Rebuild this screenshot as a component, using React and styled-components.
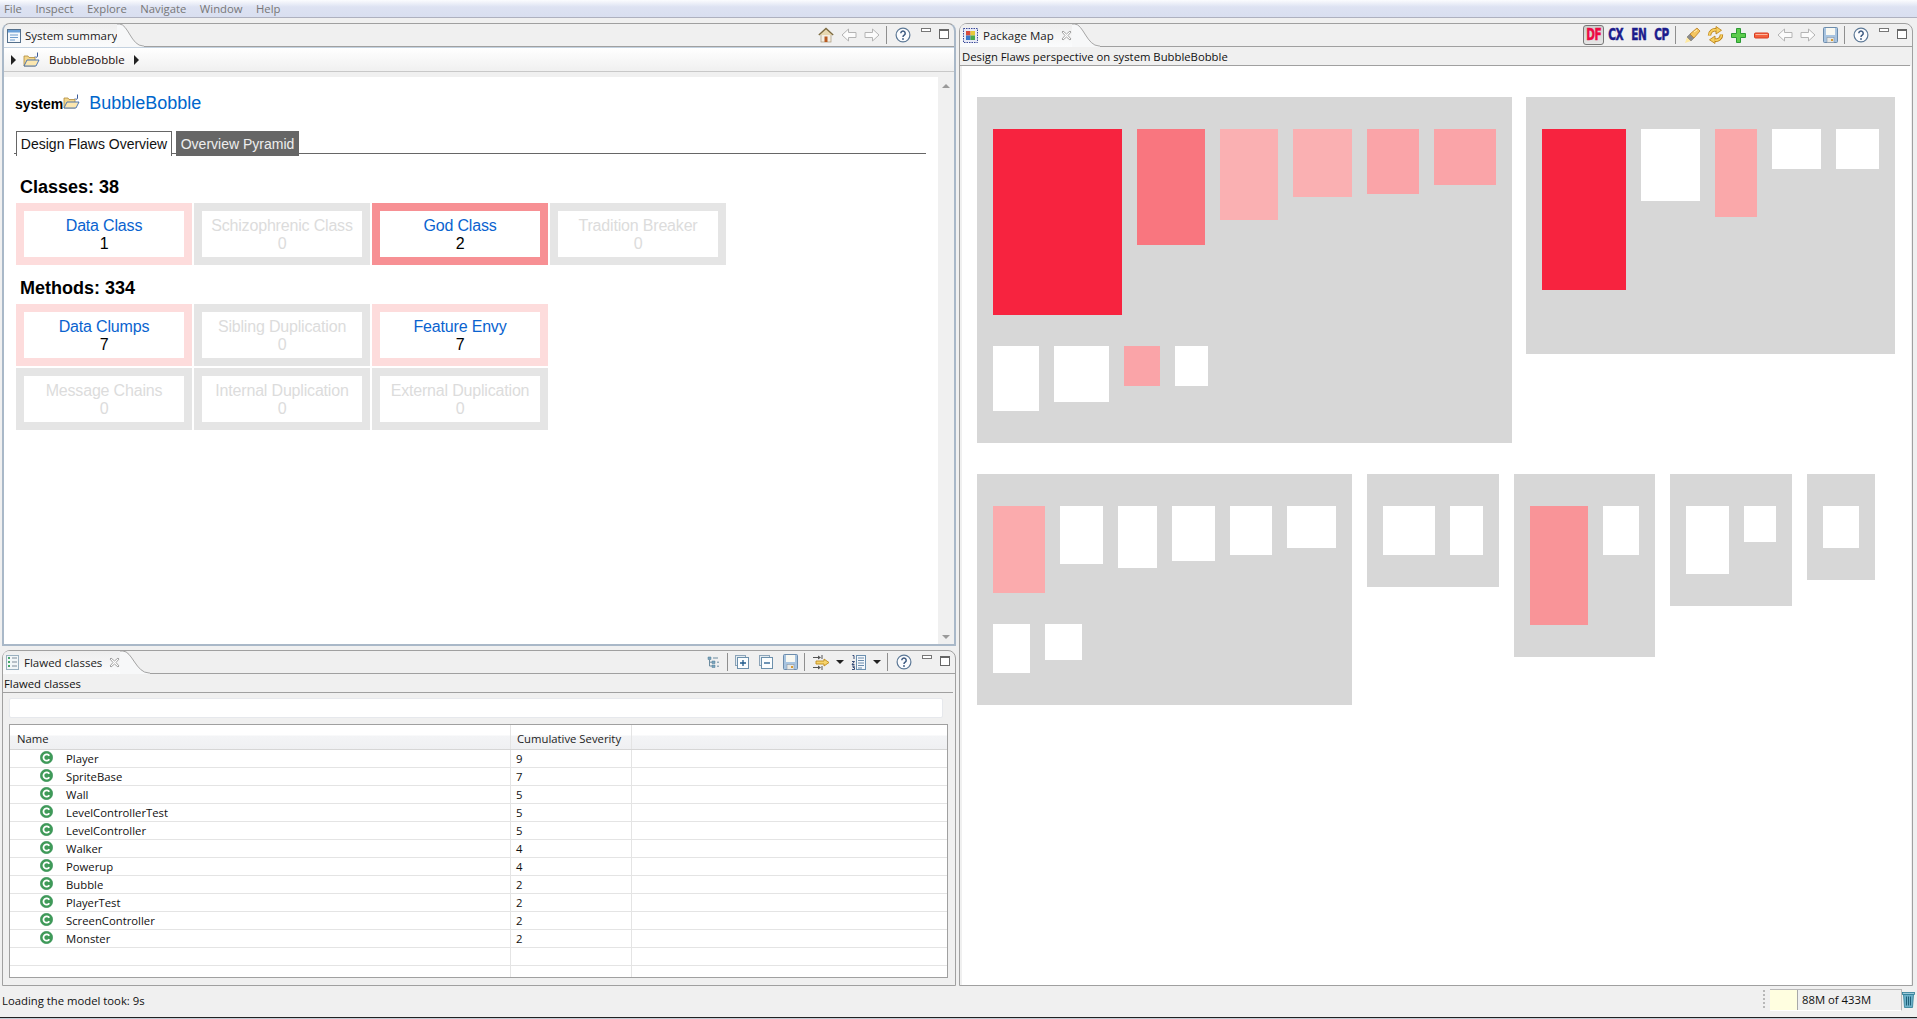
import React from 'react';
import styled, { createGlobalStyle } from 'styled-components';

const GlobalStyle = createGlobalStyle`
  html, body {
    margin: 0;
    padding: 0;
    background: #f0f0f0;
  }
  * {
    box-sizing: border-box;
  }
`;

const uiFont = `"Open Sans", "Noto Sans", sans-serif`;
const webFont = `"Liberation Sans", Arial, sans-serif`;

const Window = styled.div`
  width: 1917px;
  height: 1019px;
  display: flex;
  flex-direction: column;
  overflow: hidden;
  background: #f0f0f0;
  font-family: ${uiFont};
  font-size: 11.3px;
  color: #111;
`;

const MenuBar = styled.div`
  height: 18px;
  flex: none;
  display: flex;
  gap: 13.5px;
  align-items: center;
  padding-left: 4px;
  color: #777;
  background: linear-gradient(#fbfcfe 0, #dde2f2 7px, #d9dff0 100%);
  border-bottom: 1px solid #aeb1bf;
`;

const Workbench = styled.div`
  flex: 1;
  min-height: 0;
  display: flex;
  gap: 3px;
  padding: 5px 4px 0 2px;
`;

const Column = styled.div`
  width: 954px;
  display: flex;
  flex-direction: column;
  gap: 4px;
`;

const Pane = styled.section`
  display: flex;
  flex-direction: column;
  flex: ${p => (p.$height ? 'none' : '1')};
  height: ${p => (p.$height ? `${p.$height}px` : 'auto')};
  min-height: 0;
  border: 1px solid #a0a0a0;
  border-radius: 8px 8px 0 0;
`;

const ActivePane = styled(Pane)`
  border-left: 2px solid #a9b8c8;
  border-right: 2px solid #a9b8c8;
  border-bottom: 2px solid #a9b8c8;
`;

const TabStrip = styled.div`
  height: 23px;
  flex: none;
  display: flex;
  align-items: stretch;
  border-bottom: 1px solid #a0a0a0;
`;

const Tab = styled.div`
  display: flex;
  align-items: center;
  gap: ${p => p.$gap ?? 5}px;
  height: 23px;
  padding-left: ${p => p.$pad ?? 3}px;
  border-radius: 6px 0 0 0;
  background: linear-gradient(#eeeeee, #fbfcfd);
  color: #222;
  font-size: 11.5px;
`;

const TabTail = styled.svg`
  width: ${p => p.$w}px;
  height: 23px;
  flex: none;
`;

const ToolBar = styled.div`
  margin-left: auto;
  display: flex;
  align-items: flex-start;
  padding-right: 1px;
`;

const Slot = styled.div`
  width: ${p => p.$w || 23}px;
  height: 22px;
  flex: none;
  display: flex;
  align-items: center;
  justify-content: center;
  margin-right: ${p => p.$after || 0}px;
`;

const ToolSep = styled.div`
  width: 1px;
  height: 18px;
  margin: 2px ${p => p.$right ?? 4}px 0 ${p => p.$left ?? 2}px;
  background: #8f8f8f;
`;

const WinButton = styled.div`
  width: 18px;
  height: 22px;
  flex: none;
  display: flex;
  justify-content: center;
  padding-top: ${p => p.$top}px;
`;

const MinBox = styled.div`
  width: 10px;
  height: 4px;
  background: #fff;
  border: 1px solid #777;
`;

const MaxBox = styled.div`
  width: 10px;
  height: 10px;
  background: #fff;
  border: 1px solid #666;
  border-top-width: 2px;
`;

const Breadcrumb = styled.div`
  height: 25px;
  flex: none;
  display: flex;
  align-items: center;
  gap: 7px;
  padding-left: 7px;
  border-top: 1px solid #c4d2e0;
  border-bottom: 1px solid #c8c8c8;
  background: linear-gradient(#ffffff, #f0f0f0);
  color: #1c0c0c;
  font-size: 11.5px;
`;

const CrumbArrow = styled.span`
  width: 0;
  height: 0;
  border-left: 5px solid #222;
  border-top: 5px solid transparent;
  border-bottom: 5px solid transparent;
`;

const CrumbLabel = styled.span`
  margin: 0 2px;
`;

const SummaryArea = styled.div`
  flex: 1;
  min-height: 0;
  display: flex;
  padding-top: 5px;
`;

const SummaryBody = styled.div`
  flex: 1;
  background: #fff;
  padding: 16px 12px 0 11px;
  font-family: ${webFont};
`;

const ScrollBar = styled.div`
  width: 16px;
  flex: none;
  display: flex;
  flex-direction: column;
  align-items: center;
  justify-content: space-between;
  padding: 7px 0 5px;
`;

const ScrollArrow = styled.span`
  width: 0;
  height: 0;
  border-left: 4px solid transparent;
  border-right: 4px solid transparent;
  border-bottom: ${p => (p.$down ? '0' : '4px solid #9a9a9a')};
  border-top: ${p => (p.$down ? '4px solid #9a9a9a' : '0')};
`;

const SystemRow = styled.div`
  height: 17px;
  display: flex;
  align-items: center;
`;

const SystemLabel = styled.b`
  font-size: 14px;
  color: #000;
  margin-top: 4px;
`;

const SystemLink = styled.span`
  font-size: 18px;
  color: #0066cc;
  margin: 4px 0 0 9px;
`;

const PageTabs = styled.div`
  display: flex;
  gap: 4px;
  height: 23px;
  margin: 21px 0 0 -1px;
  padding-left: 2px;
  border-bottom: 1px solid #666;
`;

const PageTab = styled.div`
  height: 25px;
  width: ${p => p.$w}px;
  flex: none;
  display: flex;
  align-items: center;
  justify-content: center;
  font-size: 14px;
  color: ${p => (p.$active ? '#111' : '#eee')};
  background: ${p => (p.$active ? '#fff' : '#666')};
  border: ${p => (p.$active ? '1px solid #666' : '0')};
  border-bottom: 0;
`;

const SectionTitle = styled.h2`
  height: 20px;
  margin: ${p => p.$top}px 0 6px;
  padding-left: 5px;
  font-size: 18px;
  line-height: 20px;
  font-weight: bold;
  color: #000;
`;

const CardGrid = styled.div`
  display: grid;
  grid-template-columns: repeat(4, 176px);
  gap: 2px;
  margin-left: 1px;
`;

const tones = {
  light: '#fddcdc',
  strong: '#f79094',
  off: '#e5e5e5',
};

const Card = styled.div`
  height: 62px;
  padding-top: 6px;
  border: 8px solid ${p => tones[p.$tone]};
  background: #fff;
  text-align: center;
  font-size: 16px;
  line-height: 18px;
  letter-spacing: -0.18px;
`;

const CardTitle = styled.div`
  color: ${p => (p.$tone === 'off' ? '#dcdcdc' : '#0a63cf')};
`;

const CardValue = styled.div`
  color: ${p => (p.$tone === 'off' ? '#dcdcdc' : '#000')};
`;

const FormTitle = styled.div`
  height: 19px;
  flex: none;
  display: flex;
  align-items: center;
  padding-left: ${p => p.$left}px;
  border-bottom: 1px solid #a0a0a0;
  margin-right: 2px;
  color: #111;
`;

const TablePart = styled.div`
  flex: 1;
  min-height: 0;
  display: flex;
  flex-direction: column;
  padding: 5px 7px 7px 6px;
`;

const SearchBox = styled.div`
  height: 20px;
  flex: none;
  margin: 0 5px 6px 0;
  background: #fff;
  border: 1px solid #e6e8ec;
  border-radius: 2px;
`;

const Table = styled.div`
  flex: 1;
  min-height: 0;
  overflow: hidden;
  background: #fff;
  border: 1px solid #a0a0a0;
`;

const HeaderRow = styled.div`
  display: grid;
  grid-template-columns: 501px 121px 1fr;
  height: 25px;
  border-bottom: 1px solid #d6d6d6;
  background: linear-gradient(#ffffff 0, #ffffff 10px, #f3f4f6 11px, #eff0f2 100%);
`;

const HeaderCell = styled.div`
  display: flex;
  align-items: flex-end;
  padding: 0 0 3px ${p => p.$left}px;
  border-right: ${p => (p.$last ? '0' : '1px solid #e4e4e4')};
  color: #222;
`;

const Row = styled.div`
  display: grid;
  grid-template-columns: 501px 121px 1fr;
  height: 18px;
  border-bottom: 1px solid #e4e4e4;
`;

const NameCell = styled.div`
  display: flex;
  align-items: center;
  gap: 13px;
  padding-left: 30px;
  border-right: 1px solid #e4e4e4;
`;

const ValueCell = styled.div`
  display: flex;
  align-items: center;
  padding-left: 5px;
  border-right: 1px solid #e4e4e4;
`;

const EmptyCell = styled.div``;

const MapBody = styled.div`
  flex: 1;
  min-height: 0;
  margin: 0 1px 0 2px;
  padding: 31px 0 0 15px;
  background: #fff;
  display: flex;
  flex-direction: column;
  gap: 31px;
`;

const MapRow = styled.div`
  display: flex;
  align-items: flex-start;
  gap: ${p => p.$gap}px;
`;

const Package = styled.div`
  width: ${p => p.$w}px;
  height: ${p => p.$h}px;
  flex: none;
  display: flex;
  flex-wrap: wrap;
  align-items: flex-start;
  align-content: flex-start;
  gap: 31px 15px;
  padding: 32px 16px;
  background: #d7d7d7;
`;

const ClassBlock = styled.div`
  width: ${p => p.$w}px;
  height: ${p => p.$h}px;
  flex: none;
  background: ${p => p.$c};
`;

const StatusBar = styled.div`
  height: 31px;
  flex: none;
  display: flex;
  align-items: flex-start;
`;

const StatusText = styled.div`
  margin-top: 7px;
  padding-left: 2px;
  flex: 1;
`;

const Grip = styled.div`
  width: 2px;
  height: 20px;
  margin: 4px 5px 0 0;
  background: repeating-linear-gradient(#b8b8b8 0, #b8b8b8 2px, transparent 2px, transparent 4px);
`;

const HeapBox = styled.div`
  width: 132px;
  height: 22px;
  margin-top: 3px;
  display: flex;
  border-top: 1px solid #b8b8b8;
  border-right: 1px solid #b8b8b8;
  border-bottom: 1px solid #fff;
`;

const HeapFill = styled.div`
  width: 28px;
  background: #fffee0;
  border-right: 1px solid #a8a8a8;
`;

const HeapLabel = styled.div`
  flex: 1;
  padding-left: 4px;
  line-height: 19px;
  color: #111;
`;

const TrashSlot = styled.div`
  width: 15px;
  margin-top: 5px;
`;

const BottomEdge = styled.div`
  height: 2px;
  flex: none;
  background: #c4ccd6;
  border-top: 1px solid #222;
`;

const PerspectiveButton = styled.div`
  width: ${p => (p.$active ? 21 : 23)}px;
  height: ${p => (p.$active ? 20 : 22)}px;
  margin: ${p => (p.$active ? '1px 0 0 0' : '0')};
  flex: none;
  display: flex;
  align-items: center;
  justify-content: center;
  border: ${p => (p.$active ? '1px solid #777' : '0')};
  border-radius: 3px;
  background: ${p => (p.$active ? 'linear-gradient(#cfcfcf, #e6e6e6)' : 'transparent')};
`;

const PerspectiveText = styled.span`
  display: inline-block;
  font-family: "DejaVu Sans", sans-serif;
  font-weight: bold;
  font-size: 15px;
  letter-spacing: -0.5px;
  transform: scaleX(0.7);
  color: ${p => (p.$active ? '#ee0a44' : '#1c1c8c')};
  -webkit-text-stroke: 0.5px currentColor;
`;

/* icons */

const SummaryIcon = () => (
  <svg width="16" height="16" viewBox="0 0 16 16">
    <rect x="1.5" y="1.5" width="13" height="13" fill="#f5f9fd" stroke="#54708c" />
    <rect x="2" y="2" width="12" height="2.5" fill="#6aa0d8" />
    <path d="M4 7h8M4 9.5h8M4 12h5" stroke="#6f9ccc" />
  </svg>
);

const MapIcon = () => (
  <svg width="15" height="15" viewBox="0 0 15 15">
    <rect x="0.5" y="0.5" width="14" height="14" fill="#e8eaf6" stroke="#3a4a9a" strokeDasharray="1.5 1" />
    <rect x="3" y="3" width="4.5" height="4.5" fill="#d84a3a" />
    <rect x="7.5" y="3" width="4.5" height="4.5" fill="#e8c83a" />
    <rect x="3" y="7.5" width="4.5" height="4.5" fill="#3a78c8" />
    <rect x="7.5" y="7.5" width="4.5" height="4.5" fill="#4aa84a" />
  </svg>
);

const ListIcon = () => (
  <svg width="13" height="15" viewBox="0 0 13 15">
    <rect x="0.5" y="0.5" width="12" height="14" fill="#f2f6f8" stroke="#9ab0c0" />
    <path d="M2 3h2M2 7h2M2 11h2" stroke="#45a868" strokeWidth="2" />
    <path d="M6 3h5M6 7h5M6 11h5" stroke="#7c8a98" />
  </svg>
);

const CloseIcon = () => (
  <svg width="11" height="11" viewBox="0 0 11 11" style={{ marginLeft: 2 }}>
    <path d="M1 2l1-1 3.5 3L9 1l1 1-3 3.5L10 9l-1 1-3.5-3L2 10 1 9l3-3.5z" fill="#fff" stroke="#8c8c8c" strokeWidth="0.8" />
  </svg>
);

const FolderIcon = () => (
  <svg width="17" height="15" viewBox="0 0 17 15">
    <path d="M1 4h4l1 1.5h6V14H1z" fill="#f4d78c" stroke="#b08a3a" strokeWidth="0.8" />
    <path d="M1 14l3-6h12l-3 6z" fill="#fbe7b0" stroke="#3a6ab0" strokeWidth="0.9" />
    <path d="M14.5 0.5v3.5a1.3 1.3 0 0 1-2.5 0.5" fill="none" stroke="#3a5a98" strokeWidth="1" />
  </svg>
);

const HomeIcon = () => (
  <svg width="16" height="16" viewBox="0 0 16 16">
    <rect x="3" y="7" width="10" height="8" fill="#f4efe4" stroke="#a89878" strokeWidth="0.7" />
    <rect x="6.5" y="9.5" width="3" height="5.5" fill="#b85a20" />
    <path d="M0.8 8L8 1.5 15.2 8" fill="#e8d8b0" stroke="#7c6a40" strokeWidth="1.3" />
  </svg>
);

const NavIcon = ({ flip }) => (
  <svg width="16" height="14" viewBox="0 0 16 14" style={flip ? { transform: 'scaleX(-1)' } : undefined}>
    <path d="M7.5 1L1 7l6.5 6V9.5H15v-5H7.5z" fill="#fbfbfb" stroke="#b4b4b4" />
  </svg>
);

const HelpIcon = () => (
  <svg width="16" height="16" viewBox="0 0 16 16">
    <circle cx="8" cy="8" r="6.9" fill="#fbfcfe" stroke="#5c7896" strokeWidth="1.2" />
    <path d="M5.8 6.2a2.2 2.2 0 1 1 3.4 1.9C8.4 8.6 8 9 8 10" fill="none" stroke="#3d5a80" strokeWidth="1.5" />
    <circle cx="8" cy="12" r="0.9" fill="#3d5a80" />
  </svg>
);

const PenIcon = () => (
  <svg width="17" height="17" viewBox="0 0 17 17">
    <path d="M1 16l2-6 4 4z" fill="#ffe9a0" />
    <path d="M3 10l3-3 4 4-3 3z" fill="#8c8c8c" stroke="#6c6c6c" strokeWidth="0.5" />
    <path d="M6 7l7-6 3 3-6 7z" fill="#f4c560" stroke="#b87c20" strokeWidth="0.8" />
    <path d="M10 5l3-2" stroke="#fff2c0" />
  </svg>
);

const SyncIcon = () => (
  <svg width="17" height="18" viewBox="0 0 17 18">
    <path d="M2.5 9.5A5.5 5.5 0 0 1 9.5 4" fill="none" stroke="#b87c10" strokeWidth="3.4" />
    <path d="M9 0.5l5.5 3.8L9 8z" fill="#f6cf60" stroke="#b87c10" strokeWidth="0.8" />
    <path d="M2.5 9.5A5.5 5.5 0 0 1 9.5 4" fill="none" stroke="#f6cf60" strokeWidth="1.8" />
    <path d="M14.5 8.5A5.5 5.5 0 0 1 7.5 14" fill="none" stroke="#b87c10" strokeWidth="3.4" />
    <path d="M8 10l-5.5 3.8L8 17.5z" fill="#f6cf60" stroke="#b87c10" strokeWidth="0.8" />
    <path d="M14.5 8.5A5.5 5.5 0 0 1 7.5 14" fill="none" stroke="#f6cf60" strokeWidth="1.8" />
  </svg>
);

const PlusIcon = () => (
  <svg width="15" height="15" viewBox="0 0 15 15">
    <path d="M5.5 0.5h4v5h5v4h-5v5h-4v-5h-5v-4h5z" fill="#5ccc4c" stroke="#2c9a34" />
  </svg>
);

const MinusIcon = () => (
  <svg width="15" height="7" viewBox="0 0 15 7">
    <rect x="0.5" y="1" width="14" height="5" rx="1" fill="#f4603c" stroke="#d83c20" />
    <path d="M1.5 2.5h12" stroke="#fbb8a0" />
  </svg>
);

const SaveIcon = () => (
  <svg width="15" height="16" viewBox="0 0 15 16">
    <rect x="0.5" y="0.5" width="14" height="15" rx="1" fill="#a8c4e0" stroke="#6c8cac" />
    <rect x="3" y="1" width="9" height="7" fill="#f8f8f2" />
    <rect x="4" y="10.5" width="7" height="5" fill="#e8e8e4" stroke="#8a98a8" strokeWidth="0.6" />
    <rect x="8" y="12" width="2" height="2" fill="#d89a30" />
  </svg>
);

const TreeIcon = () => (
  <svg width="12" height="12" viewBox="0 0 12 12">
    <path d="M1 1h3v2.5H1zM5 5h3v2.5H5zM5 9h3v2.5H5z" fill="#7ca4bc" stroke="#4c7c98" strokeWidth="0.5" />
    <path d="M2.5 3.5V10H5M2.5 6.2H5M6 2h5M10 6.2h2M10 10.2h2" stroke="#6c8ca0" fill="none" />
  </svg>
);

const BoxIcon = ({ plus }) => (
  <svg width="14" height="14" viewBox="0 0 14 14">
    <rect x="0.5" y="0.5" width="10" height="10" fill="#e4ecf2" stroke="#8ca4b8" />
    <rect x="2.5" y="2.5" width="11" height="11" fill="#fbfdfe" stroke="#6c90ac" />
    <path d={plus ? 'M5 8h6M8 5v6' : 'M5 8h6'} stroke="#1f5a8c" strokeWidth="1.3" />
  </svg>
);

const FilterIcon = () => (
  <svg width="17" height="15" viewBox="0 0 17 15">
    <path d="M0 2.5h7M0 12.5h7" stroke="#555" />
    <path d="M5 0.5l3 2-3 2zM5 10.5l3 2-3 2z" fill="#555" />
    <path d="M9 0v4M9 11v4" stroke="#555" />
    <path d="M3 6h8V4l5 3.5-5 3.5V9H3z" fill="#f6d46c" stroke="#c08a18" strokeWidth="0.9" />
  </svg>
);

const DropArrow = styled.span`
  width: 0;
  height: 0;
  border-left: 4px solid transparent;
  border-right: 4px solid transparent;
  border-top: 4px solid #222;
`;

const NumberedIcon = () => (
  <svg width="15" height="15" viewBox="0 0 15 15">
    <path d="M1.5 0.5h1.5v3.5M1 6.5h2.5L1 9.5h2.5M1 11h2.5L2 12.5h1.5V14.5H1" fill="none" stroke="#243c6c" strokeWidth="0.9" />
    <rect x="5.5" y="0.5" width="9" height="14" fill="#f4f8fc" stroke="#6c90b0" />
    <path d="M7 3h6M7 5.5h6M7 8h6M7 10.5h6M7 13h4" stroke="#6c8cac" />
  </svg>
);

const ClassIcon = () => (
  <svg width="13" height="13" viewBox="0 0 13 13" style={{ marginTop: -3 }}>
    <circle cx="6.5" cy="6.5" r="6.2" fill="#3f9a58" stroke="#2f8a50" strokeWidth="0.5" />
    <path d="M9.3 4.7A3.2 3.2 0 1 0 9.3 8.3" fill="none" stroke="#fff" strokeWidth="1.8" />
  </svg>
);

const TrashIcon = () => (
  <svg width="13" height="17" viewBox="0 0 13 17">
    <rect x="0.5" y="1.5" width="12" height="2" fill="#9cc8d8" stroke="#2c7c94" strokeWidth="0.8" />
    <path d="M1.5 3.5h10l-1 13h-8z" fill="#6cb0c8" stroke="#2c7c94" strokeWidth="0.8" />
    <path d="M4.5 5.5v9M6.5 5.5v9M8.5 5.5v9" stroke="#1f6078" />
  </svg>
);

const TabCurve = ({ width }) => (
  <TabTail $w={width} viewBox="0 0 32 23" preserveAspectRatio="none">
    <path d="M0 0H3C13 0 17 22 31 22H32V23H0z" fill="#f7f8f9" />
    <path d="M0 0H3C13 0 17 22 31 22H32" fill="none" stroke="#a0a0a0" />
  </TabTail>
);

function WindowButtons() {
  return (
    <>
      <WinButton $top={4}><MinBox /></WinButton>
      <WinButton $top={5}><MaxBox /></WinButton>
    </>
  );
}

const classCards = [
  { name: 'Data Class', value: 1, tone: 'light' },
  { name: 'Schizophrenic Class', value: 0, tone: 'off' },
  { name: 'God Class', value: 2, tone: 'strong' },
  { name: 'Tradition Breaker', value: 0, tone: 'off' },
];

const methodCards = [
  { name: 'Data Clumps', value: 7, tone: 'light' },
  { name: 'Sibling Duplication', value: 0, tone: 'off' },
  { name: 'Feature Envy', value: 7, tone: 'light' },
  { name: '', value: '', tone: null },
  { name: 'Message Chains', value: 0, tone: 'off' },
  { name: 'Internal Duplication', value: 0, tone: 'off' },
  { name: 'External Duplication', value: 0, tone: 'off' },
];

const flawedClasses = [
  ['Player', 9],
  ['SpriteBase', 7],
  ['Wall', 5],
  ['LevelControllerTest', 5],
  ['LevelController', 5],
  ['Walker', 4],
  ['Powerup', 4],
  ['Bubble', 2],
  ['PlayerTest', 2],
  ['ScreenController', 2],
  ['Monster', 2],
];

const W = '#ffffff';
const RED = '#f7233f';
const MID = '#f9767f';
const PALE = '#fab0b2';
const SOFT = '#faa4a8';

const topPackages = [
  {
    w: 535, h: 346,
    blocks: [
      [129, 186, RED], [68, 116, MID], [58, 91, PALE], [59, 68, PALE], [52, 65, SOFT], [62, 56, SOFT],
      [46, 65, W], [55, 56, W], [36, 40, SOFT], [33, 40, W],
    ],
  },
  {
    w: 369, h: 257,
    blocks: [[84, 161, RED], [59, 72, W], [42, 88, '#faa8aa'], [49, 40, W], [43, 40, W]],
  },
];

const bottomPackages = [
  {
    w: 375, h: 231,
    blocks: [
      [52, 87, '#fbabad'], [43, 58, W], [39, 62, W], [43, 55, W], [42, 49, W], [49, 42, W],
      [37, 49, W], [37, 36, W],
    ],
  },
  { w: 132, h: 113, blocks: [[52, 49, W], [33, 49, W]] },
  { w: 141, h: 183, blocks: [[58, 119, '#f99498'], [36, 49, W]] },
  { w: 122, h: 132, blocks: [[43, 68, W], [32, 36, W]] },
  { w: 68, h: 106, blocks: [[36, 42, W]] },
];

function PackageBox({ pkg }) {
  return (
    <Package $w={pkg.w} $h={pkg.h}>
      {pkg.blocks.map(([w, h, c], i) => (
        <ClassBlock key={i} $w={w} $h={h} $c={c} />
      ))}
    </Package>
  );
}

function FlawCard({ card }) {
  if (!card.tone) return <div />;
  return (
    <Card $tone={card.tone}>
      <CardTitle $tone={card.tone}>{card.name}</CardTitle>
      <CardValue $tone={card.tone}>{card.value}</CardValue>
    </Card>
  );
}

function SystemSummary() {
  return (
    <ActivePane $height={623}>
      <TabStrip>
        <Tab $pad={2} $gap={3}>
          <SummaryIcon />
          <span>System summary</span>
        </Tab>
        <TabCurve width={27} />
        <ToolBar>
          <Slot><HomeIcon /></Slot>
          <Slot><NavIcon /></Slot>
          <Slot><NavIcon flip /></Slot>
          <ToolSep $left={3} />
          <Slot $after={3}><HelpIcon /></Slot>
          <WindowButtons />
        </ToolBar>
      </TabStrip>
      <Breadcrumb>
        <CrumbArrow />
        <FolderIcon />
        <CrumbLabel>BubbleBobble</CrumbLabel>
        <CrumbArrow />
      </Breadcrumb>
      <SummaryArea>
        <SummaryBody>
          <SystemRow>
            <SystemLabel>system</SystemLabel>
            <FolderIcon />
            <SystemLink>BubbleBobble</SystemLink>
          </SystemRow>
          <PageTabs>
            <PageTab $w={156} $active>Design Flaws Overview</PageTab>
            <PageTab $w={123}>Overview Pyramid</PageTab>
          </PageTabs>
          <SectionTitle $top={23}>Classes: 38</SectionTitle>
          <CardGrid>
            {classCards.map(c => <FlawCard key={c.name} card={c} />)}
          </CardGrid>
          <SectionTitle $top={13}>Methods: 334</SectionTitle>
          <CardGrid>
            {methodCards.map((c, i) => <FlawCard key={i} card={c} />)}
          </CardGrid>
        </SummaryBody>
        <ScrollBar>
          <ScrollArrow />
          <ScrollArrow $down />
        </ScrollBar>
      </SummaryArea>
    </ActivePane>
  );
}

function FlawedClasses() {
  return (
    <Pane>
      <TabStrip>
        <Tab>
          <ListIcon />
          <span>Flawed classes</span>
          <CloseIcon />
        </Tab>
        <TabCurve width={30} />
        <ToolBar>
          <Slot $w={24}><TreeIcon /></Slot>
          <ToolSep $right={2} />
          <Slot $w={24}><BoxIcon plus /></Slot>
          <Slot $w={24}><BoxIcon /></Slot>
          <Slot $w={24}><SaveIcon /></Slot>
          <ToolSep $right={3} />
          <Slot $w={26}><FilterIcon /></Slot>
          <Slot $w={11}><DropArrow /></Slot>
          <Slot $w={26}><NumberedIcon /></Slot>
          <Slot $w={12}><DropArrow /></Slot>
          <ToolSep $left={4} />
          <Slot $after={3}><HelpIcon /></Slot>
          <WindowButtons />
        </ToolBar>
      </TabStrip>
      <FormTitle $left={1}>Flawed classes</FormTitle>
      <TablePart>
        <SearchBox />
        <Table>
          <HeaderRow>
            <HeaderCell $left={7}>Name</HeaderCell>
            <HeaderCell $left={6}>Cumulative Severity</HeaderCell>
            <HeaderCell $last $left={0} />
          </HeaderRow>
          {flawedClasses.map(([name, severity]) => (
            <Row key={name}>
              <NameCell>
                <ClassIcon />
                <span>{name}</span>
              </NameCell>
              <ValueCell>{severity}</ValueCell>
              <EmptyCell />
            </Row>
          ))}
          {[0, 1, 2].map(i => (
            <Row key={i}>
              <NameCell />
              <ValueCell />
              <EmptyCell />
            </Row>
          ))}
        </Table>
      </TablePart>
    </Pane>
  );
}

function PackageMap() {
  return (
    <Pane>
      <TabStrip>
        <Tab>
          <MapIcon />
          <span>Package Map</span>
          <CloseIcon />
        </Tab>
        <TabCurve width={28} />
        <ToolBar>
          <PerspectiveButton $active><PerspectiveText $active>DF</PerspectiveText></PerspectiveButton>
          <PerspectiveButton><PerspectiveText>CX</PerspectiveText></PerspectiveButton>
          <PerspectiveButton><PerspectiveText>EN</PerspectiveText></PerspectiveButton>
          <PerspectiveButton><PerspectiveText>CP</PerspectiveText></PerspectiveButton>
          <ToolSep $right={5} />
          <Slot><PenIcon /></Slot>
          <Slot><SyncIcon /></Slot>
          <Slot><PlusIcon /></Slot>
          <Slot><MinusIcon /></Slot>
          <Slot><NavIcon /></Slot>
          <Slot><NavIcon flip /></Slot>
          <Slot><SaveIcon /></Slot>
          <ToolSep />
          <Slot $after={3}><HelpIcon /></Slot>
          <WindowButtons />
        </ToolBar>
      </TabStrip>
      <FormTitle $left={2}>Design Flaws perspective on system BubbleBobble</FormTitle>
      <MapBody>
        <MapRow $gap={14}>
          {topPackages.map((p, i) => <PackageBox key={i} pkg={p} />)}
        </MapRow>
        <MapRow $gap={15}>
          {bottomPackages.map((p, i) => <PackageBox key={i} pkg={p} />)}
        </MapRow>
      </MapBody>
    </Pane>
  );
}

export default function App() {
  return (
    <>
      <GlobalStyle />
      <Window>
        <MenuBar>
          <span>File</span>
          <span>Inspect</span>
          <span>Explore</span>
          <span>Navigate</span>
          <span>Window</span>
          <span>Help</span>
        </MenuBar>
        <Workbench>
          <Column>
            <SystemSummary />
            <FlawedClasses />
          </Column>
          <Column>
            <PackageMap />
          </Column>
        </Workbench>
        <StatusBar>
          <StatusText>Loading the model took: 9s</StatusText>
          <Grip />
          <HeapBox>
            <HeapFill />
            <HeapLabel>88M of 433M</HeapLabel>
          </HeapBox>
          <TrashSlot><TrashIcon /></TrashSlot>
        </StatusBar>
        <BottomEdge />
      </Window>
    </>
  );
}
